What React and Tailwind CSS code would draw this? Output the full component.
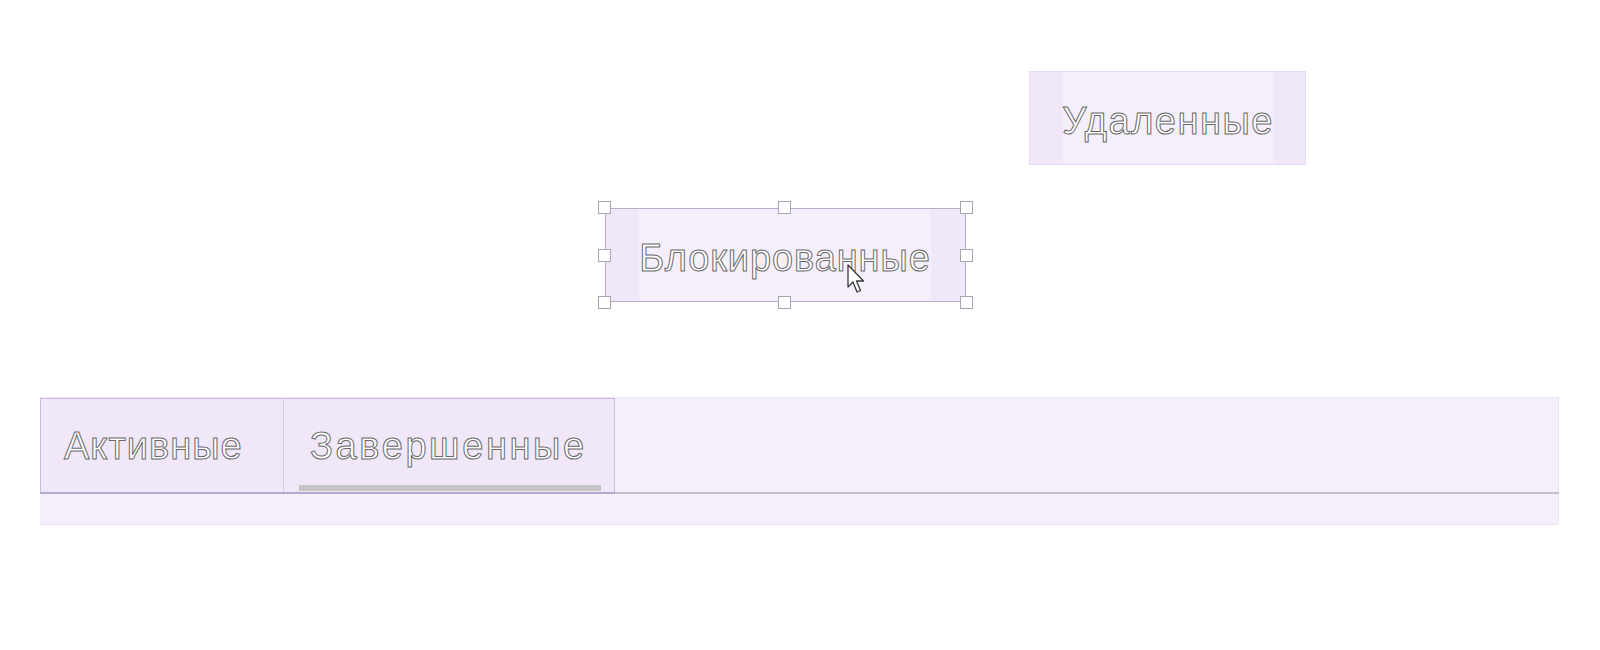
const outline = 'text-white [-webkit-text-stroke:1px_#6a6a6a] font-["Liberation_Sans",Arial,sans-serif] text-[38px] leading-none whitespace-nowrap';

function Handle({ className }) {
  return <div className={`absolute w-[13px] h-[13px] bg-white border border-[#aaa4b4] ${className}`} />;
}

function Cursor() {
  return (
    <svg className="absolute left-[240px] top-[54px]" width="20" height="32" viewBox="0 0 20 32">
      <path d="M2 2 L2 24 L7 19 L11 29 L14.5 27.5 L10.5 18 L17.5 18 Z" fill="#fff" stroke="#3a3a3a" strokeWidth="1.3" strokeLinejoin="round" />
    </svg>
  );
}

export default function App() {
  return (
    <div className="relative w-[1600px] h-[650px] bg-white overflow-hidden">
      {/* floating tab: Удаленные */}
      <div className="absolute left-[1029px] top-[71px] w-[277px] h-[94px] flex pl-[33px] bg-[#f0e7f9] border border-dotted border-[#ddd0ee]">
        <div className="w-[210px] h-full flex items-center justify-center pt-[6px] bg-[#f5effb]">
          <span className={`${outline} tracking-[1.5px]`}>Удаленные</span>
        </div>
      </div>

      {/* selected tab: Блокированные */}
      <div className="absolute left-[605px] top-[208px] w-[361px] h-[94px] flex pl-[33px] bg-[#f0e7f9] border border-[#b8aecb]">
        <div className="w-[292px] h-full flex items-center justify-center pt-[6px] bg-[#f5effb]">
          <span className={`${outline} tracking-[0.9px]`}>Блокированные</span>
        </div>
        <Handle className="-left-[8px] -top-[8px]" />
        <Handle className="left-[172px] -top-[8px]" />
        <Handle className="-right-[8px] -top-[8px]" />
        <Handle className="-left-[8px] top-[40px]" />
        <Handle className="-right-[8px] top-[40px]" />
        <Handle className="-left-[8px] -bottom-[8px]" />
        <Handle className="left-[172px] -bottom-[8px]" />
        <Handle className="-right-[8px] -bottom-[8px]" />
        <Cursor />
      </div>

      {/* tab bar */}
      <div className="absolute left-[40px] top-[397px] w-[1519px] flex flex-col">
        <div className="flex h-[95px] bg-[#f5effb] border-t border-dotted border-[#e4dbf1]">
          <div className="w-[243px] h-full flex items-center pl-[23px] bg-[#f0e7f9] border-t border-l border-[#cbbde0]">
            <span className={`${outline} tracking-[1px]`}>Активные</span>
          </div>
          <div className="relative w-[332px] h-full flex items-center pl-[26px] bg-[#f0e7f9] border-t border-l border-r border-[#cbbde0] border-l-[#d6cbe6]">
            <span className={`${outline} tracking-[2.6px]`}>Завершенные</span>
            <div className="absolute left-[15px] bottom-[1px] w-[302px] h-[6px] bg-[#c4c4c4]" />
          </div>
          <div className="flex-1 border-r border-dotted border-[#e4dbf1]" />
        </div>
        <div className="flex h-[2px]">
          <div className="w-[575px] bg-[#b7a8d0]" />
          <div className="flex-1 bg-[#c6c2cc]" />
        </div>
        <div className="h-[31px] bg-[#f5effb] border-r border-b border-dotted border-[#e4dbf1]" />
      </div>
    </div>
  );
}
